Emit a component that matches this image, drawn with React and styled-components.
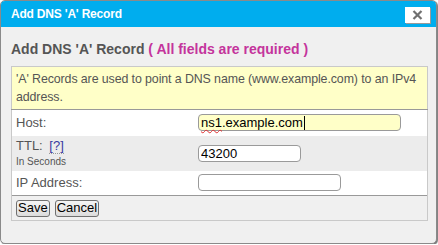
import React from 'react';
import styled, { createGlobalStyle } from 'styled-components';

const GlobalStyle = createGlobalStyle`
  html, body {
    margin: 0;
    padding: 0;
    background: #fff;
  }
  body {
    font-family: "Liberation Sans", Arial, sans-serif;
  }
`;

const Dialog = styled.div`
  box-sizing: border-box;
  width: 437px;
  height: 244px;
  border: 1px solid #8a8a8a;
  border-radius: 5px;
  background: #f0f0f0;
  box-shadow: 1px 1px 1px #777;
  overflow: hidden;
  display: flex;
  flex-direction: column;
`;

const TitleBar = styled.div`
  height: 26px;
  background: #00adee;
  display: flex;
  align-items: center;
  justify-content: space-between;
  padding: 0 6px 0 10px;
`;

const TitleText = styled.span`
  color: #fff;
  font-weight: bold;
  font-size: 12px;
  letter-spacing: -0.2px;
`;

const CloseButton = styled.button`
  box-sizing: border-box;
  width: 25px;
  height: 16px;
  margin-top: 2px;
  padding: 0;
  border: none;
  background: #fff;
  box-shadow: 1px 1px 0 #9a9a9a;
  display: flex;
  align-items: center;
  justify-content: center;
`;

const Body = styled.div`
  padding: 0 10px;
`;

const Heading = styled.h2`
  margin: 14px 0 0 0;
  font-size: 14px;
  line-height: 17px;
  font-weight: bold;
  color: #555;
`;

const Required = styled.span`
  color: #c4349c;
`;

const FormTable = styled.table`
  margin-top: 8px;
  width: 417px;
  border-collapse: collapse;
  font-size: 13px;
  color: #555;
`;

const InfoCell = styled.td`
  background: #ffffc8;
  border: 1px solid #c9c9c9;
  border-bottom-color: #999;
  padding: 3px 2px 3px 4px;
  font-size: 12.4px;
  line-height: 18px;
  letter-spacing: -0.1px;
`;

const Row = styled.tr`
  background: ${p => (p.$shade ? '#ececec' : '#fff')};
  height: ${p => p.$h}px;
  td:first-child {
    border-left: 1px solid #c9c9c9;
  }
  td:last-child {
    border-right: 1px solid #c9c9c9;
  }
`;

const LabelCell = styled.td`
  width: 178px;
  padding: 0 0 0 4px;
  vertical-align: middle;
  line-height: 15px;
`;

const InputCell = styled.td`
  padding: 0 0 0 4px;
  vertical-align: middle;
`;

const Help = styled.a`
  color: #3a3aa0;
  text-decoration: none;
  border-bottom: 1px dotted #999;
  margin-left: 3px;
`;

const Hint = styled.div`
  font-size: 10px;
  line-height: 12px;
  margin-top: 3px;
`;

const TextInput = styled.input`
  box-sizing: border-box;
  width: ${p => p.$w}px;
  height: 17px;
  border: 1px solid #9a9a9a;
  border-radius: 4px;
  padding: 0 2px;
  font-family: "Liberation Sans", Arial, sans-serif;
  font-size: 13px;
  color: #000;
  background: #fff;
  display: block;
`;

const FocusedInput = styled.div`
  box-sizing: border-box;
  width: ${p => p.$w}px;
  height: 17px;
  border: 1px solid #9a9a9a;
  border-radius: 4px;
  padding: 0 2px;
  font-size: 13px;
  line-height: 15px;
  color: #000;
  background: #ffffc8;
  display: flex;
  align-items: center;
`;

const Misspelled = styled.span`
  text-decoration: underline wavy #e03030;
  text-decoration-thickness: 1px;
  text-underline-offset: 2px;
`;

const Caret = styled.span`
  display: inline-block;
  width: 1px;
  height: 14px;
  background: #000;
  margin-left: 1px;
`;

const ButtonRow = styled.tr`
  height: 25px;
  td {
    border-top: 1px solid #999;
    border-bottom: 1px solid #c9c9c9;
    border-left: 1px solid #c9c9c9;
    border-right: 1px solid #c9c9c9;
    padding: 0 4px;
  }
`;

const Buttons = styled.div`
  display: flex;
  gap: 5px;
`;

const Button = styled.button`
  box-sizing: border-box;
  height: 17px;
  padding: 0 1px;
  border: 1px solid #707070;
  border-radius: 3px;
  background: linear-gradient(#f5f5f5, #dcdcdc);
  font-family: "Liberation Sans", Arial, sans-serif;
  font-size: 13px;
  line-height: 14px;
  color: #000;
`;

function CloseIcon() {
  return (
    <svg width="11" height="10" viewBox="0 0 11 10">
      <path d="M1.5 1 L9.5 9 M9.5 1 L1.5 9" stroke="#707070" strokeWidth="2.2" />
    </svg>
  );
}

export default function App() {
  return (
    <>
      <GlobalStyle />
      <Dialog>
        <TitleBar>
          <TitleText>Add DNS 'A' Record</TitleText>
          <CloseButton aria-label="Close"><CloseIcon /></CloseButton>
        </TitleBar>
        <Body>
          <Heading>
            Add DNS 'A' Record <Required>( All fields are required )</Required>
          </Heading>
          <FormTable>
            <tbody>
              <tr>
                <InfoCell colSpan={2}>
                  'A' Records are used to point a DNS name (www.example.com) to an IPv4 address.
                </InfoCell>
              </tr>
              <Row $h={26}>
                <LabelCell>Host:</LabelCell>
                <InputCell>
                  <FocusedInput $w={203}>
                    <Misspelled>ns1</Misspelled>.example.com<Caret />
                  </FocusedInput>
                </InputCell>
              </Row>
              <Row $h={35} $shade>
                <LabelCell>
                  TTL: <Help href="#">[?]</Help>
                  <Hint>In Seconds</Hint>
                </LabelCell>
                <InputCell>
                  <TextInput $w={103} defaultValue="43200" />
                </InputCell>
              </Row>
              <Row $h={25}>
                <LabelCell>IP Address:</LabelCell>
                <InputCell>
                  <TextInput $w={143} defaultValue="" />
                </InputCell>
              </Row>
              <ButtonRow>
                <td colSpan={2}>
                  <Buttons>
                    <Button>Save</Button>
                    <Button>Cancel</Button>
                  </Buttons>
                </td>
              </ButtonRow>
            </tbody>
          </FormTable>
        </Body>
      </Dialog>
    </>
  );
}
